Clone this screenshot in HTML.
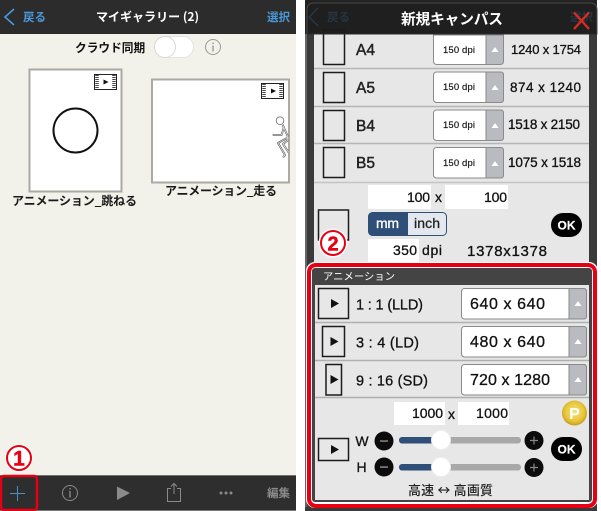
<!DOCTYPE html>
<html><head><meta charset="utf-8"><style>
html,body{margin:0;padding:0;background:#fff;width:601px;height:511px;overflow:hidden}
svg{display:block}
text{font-family:"Liberation Sans","Noto Sans CJK JP",sans-serif;fill:#111}
.j{font-family:"Noto Sans CJK JP","Liberation Sans",sans-serif}
.b{font-weight:700}
.t{stroke:#111;stroke-width:.3}
.s{font-size:15.500px;fill:#222;stroke:#222;stroke-width:.45}
.d{font-size:9.500px;stroke:#111;stroke-width:.15}
</style></head><body>
<svg width="601" height="511" viewBox="0 0 601 511" xmlns="http://www.w3.org/2000/svg">
<defs>
<radialGradient id="g" cx="50%" cy="45%" r="55%"><stop offset="0" stop-color="#f6e27a"/><stop offset=".7" stop-color="#e8c53a"/><stop offset="1" stop-color="#c89b1a"/></radialGradient>
<clipPath id="c"><rect x="153" y="80" width="135.500" height="102"/></clipPath>
</defs>
<rect width="601" height="511" fill="#fff"/>

<!-- LEFT PANEL -->
<rect x="0" y="0" width="296" height="511" fill="#f3f2ea"/>
<rect x="0" y="0" width="296" height="34" fill="#2c2c2c"/>
<path d="M14 9 L5 17 L14 25" fill="none" stroke="#4a98d8" stroke-width="1.600"/>
<text x="23" y="21" class="j" font-size="11.500" font-weight="700" style="fill:#4a98d8">戻る</text>
<text x="96" y="21" class="j b" font-size="12" textLength="103" style="fill:#fff">マイギャラリー (2)</text>
<text x="267" y="21" class="j" font-size="11.500" font-weight="700" style="fill:#4a98d8">選択</text>

<text x="75" y="52" class="j b" font-size="11.700" style="fill:#111">クラウド同期</text>
<rect x="154.500" y="36.500" width="39" height="21" rx="10.500" fill="#fff" stroke="#e4e4df"/>
<circle cx="165" cy="47" r="10.500" fill="#fff" stroke="#d8d8d4"/>
<circle cx="213" cy="47" r="7.500" fill="none" stroke="#999" stroke-width="1"/>
<rect x="212.300" y="45.500" width="1.400" height="6" fill="#999"/><rect x="212.300" y="42.500" width="1.400" height="1.500" fill="#999"/>

<!-- thumb 1 -->
<rect x="29.500" y="69.500" width="92" height="122" fill="#fff" stroke="#aaa9a2" stroke-width="2"/>
<circle cx="75.500" cy="130.500" r="22" fill="none" stroke="#111" stroke-width="2"/>
<rect x="94.500" y="74.500" width="22" height="15" fill="#fff" stroke="#222" stroke-width="1"/>
<path d="M97 75V89M114 75V89" stroke="#444" stroke-width="3.500" stroke-dasharray="1 1" fill="none"/>
<path d="M103.500 79.500L108.500 82L103.500 84.500Z" fill="#111"/>
<text x="12" y="205" class="j b" font-size="12" textLength="125" style="fill:#1a1a1a">アニメーション_跳ねる</text>

<!-- thumb 2 -->
<rect x="152" y="79.500" width="137" height="103" fill="#fff" stroke="#aaa9a2" stroke-width="2"/>
<rect x="261.500" y="83.500" width="22" height="15" fill="#fff" stroke="#222" stroke-width="1"/>
<path d="M264 84V98M281 84V98" stroke="#444" stroke-width="3.500" stroke-dasharray="1 1" fill="none"/>
<path d="M271 88.500L276 91L271 93.500Z" fill="#111"/>
<g clip-path="url(#c)" fill="none">
<circle cx="280" cy="120.700" r="3.800" stroke="#666" stroke-width=".8"/>
<path d="M282.500 124.500L288 137M272.700 135H281.500L284 127M287 138L278 143L285 155L283 157.500M288 140L283 144L289 153" stroke="#555" stroke-width="1.900" stroke-linejoin="round"/>
<path d="M282.500 124.500L288 137M272.700 135H281.500L284 127M287 138L278 143L285 155L283 157.500M288 140L283 144L289 153" stroke="#fff" stroke-width=".7" stroke-linejoin="round"/>
</g>
<text x="165" y="195" class="j b" font-size="12" textLength="112" style="fill:#1a1a1a">アニメーション_走る</text>

<!-- toolbar -->
<rect x="0" y="475" width="296" height="36" fill="#2e2e2e"/>
<rect x="0" y="475" width="296" height="1" fill="#6f6f6f"/>
<rect x="0" y="510" width="296" height="1" fill="#777"/>
<path d="M17.500 486V501M10 493.500H25" stroke="#4a90c8" stroke-width="1"/>
<circle cx="70" cy="493" r="7.500" fill="none" stroke="#8a8a8a" stroke-width="1"/>
<rect x="69.300" y="491" width="1.400" height="6.500" fill="#8a8a8a"/><rect x="69.300" y="488" width="1.400" height="1.500" fill="#8a8a8a"/>
<path d="M117 486.500L130 493L117 500Z" fill="#8a8a8a"/>
<path d="M171 488.500H167.500V501.500H180.500V488.500H177M174 494V484M171 486.500L174 483.500L177 486.500" fill="none" stroke="#8a8a8a" stroke-width="1"/>
<circle cx="221" cy="493" r="1.500" fill="#8a8a8a"/><circle cx="226" cy="493" r="1.500" fill="#8a8a8a"/><circle cx="231" cy="493" r="1.500" fill="#8a8a8a"/>
<text x="267" y="497" class="j b" font-size="11.500" style="fill:#8a8a8a">編集</text>
<rect x="1" y="476" width="36" height="34" rx="3" fill="none" stroke="#e60012" stroke-width="2.500"/>
<circle cx="19" cy="458" r="14" fill="#fff"/>
<circle cx="19" cy="458" r="12" fill="none" stroke="#e60012" stroke-width="2"/>
<text x="19" y="465.500" text-anchor="middle" class="b" font-size="21" style="fill:#e60012;stroke:#e60012;stroke-width:.5">1</text>

<!-- RIGHT PANEL -->
<rect x="305" y="0" width="292" height="511" fill="#3a3a3a"/>
<rect x="305" y="34" width="2" height="477" fill="#666"/>
<rect x="314" y="34" width="275" height="228" fill="#e7e7e7"/>
<path d="M305 34V0H597V34Z" fill="#232323"/>
<path d="M307 34V10Q307 3 314 3H590Q597 3 597 10V34Z" fill="#1f1f1f" stroke="#4a4a4a" stroke-width="1"/>
<path d="M318 8L309 17L318 26" fill="none" stroke="#263644" stroke-width="1.600"/>
<text x="327" y="21" class="j" font-size="11.500" font-weight="700" style="fill:#273542">戻る</text>
<text x="570" y="21" class="j" font-size="11.500" font-weight="700" style="fill:#273542">選択</text>
<text x="401" y="24" class="j b" font-size="14.700" textLength="102" style="fill:#fff">新規キャンパス</text>
<path d="M574 12.500L589 29M589 12.500L574 29" stroke="#d92c20" stroke-width="2.400" fill="none"/>

<!-- rows -->
<g stroke="#b5b5b5" stroke-width="1.500"><path d="M314 68.500H589M314 106.500H589M314 143.500H589"/></g>
<path d="M314 182.500H589" stroke="#c4c4c4" stroke-width="1.500"/>
<g fill="none" stroke="#1c1c1c" stroke-width="1.500">
<rect x="323.500" y="30" width="21" height="34.500"/>
<rect x="323.500" y="72.500" width="21" height="30"/>
<rect x="323.500" y="110.500" width="21" height="30"/>
<rect x="323.500" y="147.500" width="21" height="30"/>
</g>
<path d="M307 34H597" stroke="#2b2b2b" stroke-width="1"/>
<text x="356" y="55" class="s">A4</text>
<text x="356" y="93" class="s">A5</text>
<text x="356" y="131" class="s">B4</text>
<text x="356" y="168" class="s">B5</text>

<!-- small selects -->
<path d="M433.500 35H486V64.500H437Q433.500 64.500 433.500 61Z" fill="#fff" stroke="#8a8a8a"/>
<path d="M486 35H503.500V61Q503.500 64.500 500 64.500H486Z" fill="#b9bbc0" stroke="#8a8a8a"/>
<path d="M495 47L498.500 52H491.500Z" fill="#fff"/>
<text x="443" y="53" textLength="32" class="d">150 dpi</text>

<rect x="433.500" y="72" width="70" height="30.500" rx="3" fill="#fff" stroke="#8a8a8a"/>
<path d="M486 72H500.500Q503.500 72 503.500 75V99.500Q503.500 102.500 500.500 102.500H486Z" fill="#b9bbc0" stroke="#8a8a8a"/>
<path d="M495 85L498.500 90H491.500Z" fill="#fff"/>
<text x="443" y="90" textLength="32" class="d">150 dpi</text>

<rect x="433.500" y="110" width="70" height="30.500" rx="3" fill="#fff" stroke="#8a8a8a"/>
<path d="M486 110H500.500Q503.500 110 503.500 113V137.500Q503.500 140.500 500.500 140.500H486Z" fill="#b9bbc0" stroke="#8a8a8a"/>
<path d="M495 123L498.500 128H491.500Z" fill="#fff"/>
<text x="443" y="128" textLength="32" class="d">150 dpi</text>

<rect x="433.500" y="147.500" width="70" height="30.500" rx="3" fill="#fff" stroke="#8a8a8a"/>
<path d="M486 147.500H500.500Q503.500 147.500 503.500 150.500V175Q503.500 178 500.500 178H486Z" fill="#b9bbc0" stroke="#8a8a8a"/>
<path d="M495 161L498.500 166H491.500Z" fill="#fff"/>
<text x="443" y="166" textLength="32" class="d">150 dpi</text>

<text x="511" y="54" font-size="13" textLength="70" class="t">1240 x 1754</text>
<text x="510" y="92" font-size="13.500" textLength="71" class="t">874 x 1240</text>
<text x="508" y="129" font-size="13.500" textLength="72" class="t">1518 x 2150</text>
<text x="508" y="167" font-size="13.500" textLength="73" class="t">1075 x 1518</text>

<!-- custom -->
<rect x="368" y="185" width="63" height="24" fill="#fff"/>
<rect x="445" y="185" width="63" height="24" fill="#fff"/>
<text x="407" y="202" font-size="14" textLength="23" class="t">100</text>
<text x="435" y="202" font-size="14" class="t">x</text>
<text x="484" y="202" font-size="14" textLength="23" class="t">100</text>
<rect x="318.500" y="210" width="30" height="30" fill="none" stroke="#1c1c1c" stroke-width="1.500"/>
<rect x="368.500" y="212.500" width="78" height="23" rx="4" fill="#e4e8ee" stroke="#2f4e78"/>
<path d="M372.500 212.500H408V235.500H372.500Q368.500 235.500 368.500 231.500V216.500Q368.500 212.500 372.500 212.500Z" fill="#2f4e78"/>
<text x="376" y="228" font-size="14" textLength="23" style="fill:#fff;stroke:#fff;stroke-width:.3">mm</text>
<text x="414" y="228" font-size="14" textLength="26" style="fill:#222;stroke:#222;stroke-width:.3">inch</text>
<rect x="551" y="213" width="31" height="24" rx="12" fill="#000"/>
<text x="566.500" y="229.500" text-anchor="middle" class="b" font-size="12" style="fill:#fff;stroke:#fff;stroke-width:.2">OK</text>
<rect x="368" y="239" width="51" height="23" fill="#fff"/>
<text x="393" y="255" font-size="14" textLength="24" class="t">350</text>
<text x="422" y="255" font-size="14" textLength="20" class="t">dpi</text>
<text x="467" y="256" font-size="15" textLength="80" class="t">1378x1378</text>
<circle cx="333" cy="243" r="14.500" fill="#fff"/>
<circle cx="333" cy="243" r="12" fill="none" stroke="#e60012" stroke-width="2"/>
<text x="333" y="250.500" text-anchor="middle" class="b" font-size="20" style="fill:#e60012;stroke:#e60012;stroke-width:.5">2</text>

<!-- red box -->
<rect x="305" y="507" width="292" height="4" fill="#3a3a3a"/>
<rect x="306" y="262" width="292" height="246" rx="9" fill="#fff"/>
<rect x="309" y="265" width="286" height="241" rx="7" fill="none" stroke="#e60012" stroke-width="4"/>
<rect x="311.500" y="267.500" width="281" height="235" rx="3" fill="#fff"/>
<rect x="312" y="268" width="280" height="234" rx="3" fill="#444"/>
<rect x="315" y="285" width="274" height="215" fill="#e7e7e7"/>
<text x="323" y="280" class="j" font-size="10.300" textLength="72" style="fill:#fff">アニメーション</text>
<g stroke="#b0b0b0" stroke-width="1.500"><path d="M315 322.500H589M315 360.500H589M315 397.500H589"/></g>
<g fill="none" stroke="#1c1c1c" stroke-width="1.500">
<rect x="318.500" y="288.500" width="30" height="30"/>
<rect x="322.500" y="326.500" width="22" height="30"/>
<rect x="326" y="364.500" width="15.500" height="30.500"/>
<rect x="318.500" y="438.500" width="30" height="22"/>
</g>
<g fill="#111">
<path d="M331 299L339 303.500L331 308Z"/>
<path d="M330.500 337L338.500 341.500L330.500 346Z"/>
<path d="M330.500 375L338.500 379.500L330.500 384Z"/>
<path d="M331 445L339 449.500L331 454Z"/>
</g>
<text x="356" y="309.500" font-size="14.500" textLength="67" class="t">1 : 1 (LLD)</text>
<text x="356" y="347.500" font-size="14.500" textLength="63" class="t">3 : 4 (LD)</text>
<text x="356" y="385.500" font-size="14.500" textLength="72" class="t">9 : 16 (SD)</text>

<rect x="461.500" y="288.500" width="125" height="30.500" rx="3" fill="#fff" stroke="#8a8a8a"/>
<path d="M569 288.500H583.500Q586.500 288.500 586.500 291.500V316Q586.500 319 583.500 319H569Z" fill="#b9bbc0" stroke="#8a8a8a"/>
<path d="M578 301L581.500 306H574.500Z" fill="#fff"/>
<text x="470" y="309" font-size="16" textLength="75" class="t">640 x 640</text>
<rect x="461.500" y="326.500" width="125" height="30.500" rx="3" fill="#fff" stroke="#8a8a8a"/>
<path d="M569 326.500H583.500Q586.500 326.500 586.500 329.500V354Q586.500 357 583.500 357H569Z" fill="#b9bbc0" stroke="#8a8a8a"/>
<path d="M578 339L581.500 344H574.500Z" fill="#fff"/>
<text x="470" y="347" font-size="16" textLength="75" class="t">480 x 640</text>
<rect x="461.500" y="364.500" width="125" height="30.500" rx="3" fill="#fff" stroke="#8a8a8a"/>
<path d="M569 364.500H583.500Q586.500 364.500 586.500 367.500V392Q586.500 395 583.500 395H569Z" fill="#b9bbc0" stroke="#8a8a8a"/>
<path d="M578 377L581.500 382H574.500Z" fill="#fff"/>
<text x="470" y="385" font-size="16" textLength="80" class="t">720 x 1280</text>

<!-- bottom custom -->
<rect x="394" y="402" width="51" height="23" fill="#fff"/>
<rect x="458" y="402" width="51" height="23" fill="#fff"/>
<text x="412" y="418" font-size="14" textLength="31" class="t">1000</text>
<text x="448" y="419" font-size="14" class="t">x</text>
<text x="476" y="418" font-size="14" textLength="32" class="t">1000</text>
<circle cx="574.500" cy="413" r="12.500" fill="url(#g)"/>
<text x="574.500" y="419" text-anchor="middle" class="b" font-size="16" style="fill:#fff">P</text>
<text x="362" y="446" text-anchor="middle" font-size="14" class="t">W</text>
<text x="361.500" y="472" text-anchor="middle" font-size="14" class="t">H</text>
<circle cx="384" cy="441" r="9.500" fill="#0c0c0c"/><rect x="380" y="440.300" width="8" height="1.500" fill="#888"/>
<circle cx="384" cy="467" r="9.500" fill="#0c0c0c"/><rect x="380" y="466.300" width="8" height="1.500" fill="#888"/>
<rect x="399" y="437" width="122" height="6.500" rx="3.200" fill="#a8a8a8"/>
<rect x="399" y="437" width="42" height="6.500" rx="3.200" fill="#2f4e78"/>
<rect x="399" y="464" width="122" height="6.500" rx="3.200" fill="#a8a8a8"/>
<rect x="399" y="464" width="42" height="6.500" rx="3.200" fill="#2f4e78"/>
<circle cx="441" cy="440" r="9.500" fill="#fff" stroke="#eee"/>
<circle cx="441" cy="467" r="9.500" fill="#fff" stroke="#eee"/>
<circle cx="534" cy="440.500" r="9.500" fill="#0c0c0c"/><path d="M530 440.500H538M534 436.500V444.500" stroke="#888" stroke-width="1.200"/>
<circle cx="534" cy="467.500" r="9.500" fill="#0c0c0c"/><path d="M530 467.500H538M534 463.500V471.500" stroke="#888" stroke-width="1.200"/>
<rect x="551" y="437" width="31" height="24" rx="12" fill="#000"/>
<text x="566.500" y="453.500" text-anchor="middle" class="b" font-size="12" style="fill:#fff;stroke:#fff;stroke-width:.2">OK</text>
<text x="408" y="495" class="j" font-size="13" font-weight="500" textLength="85" style="fill:#222">高速 ↔ 高画質</text>
</svg>
</body></html>
